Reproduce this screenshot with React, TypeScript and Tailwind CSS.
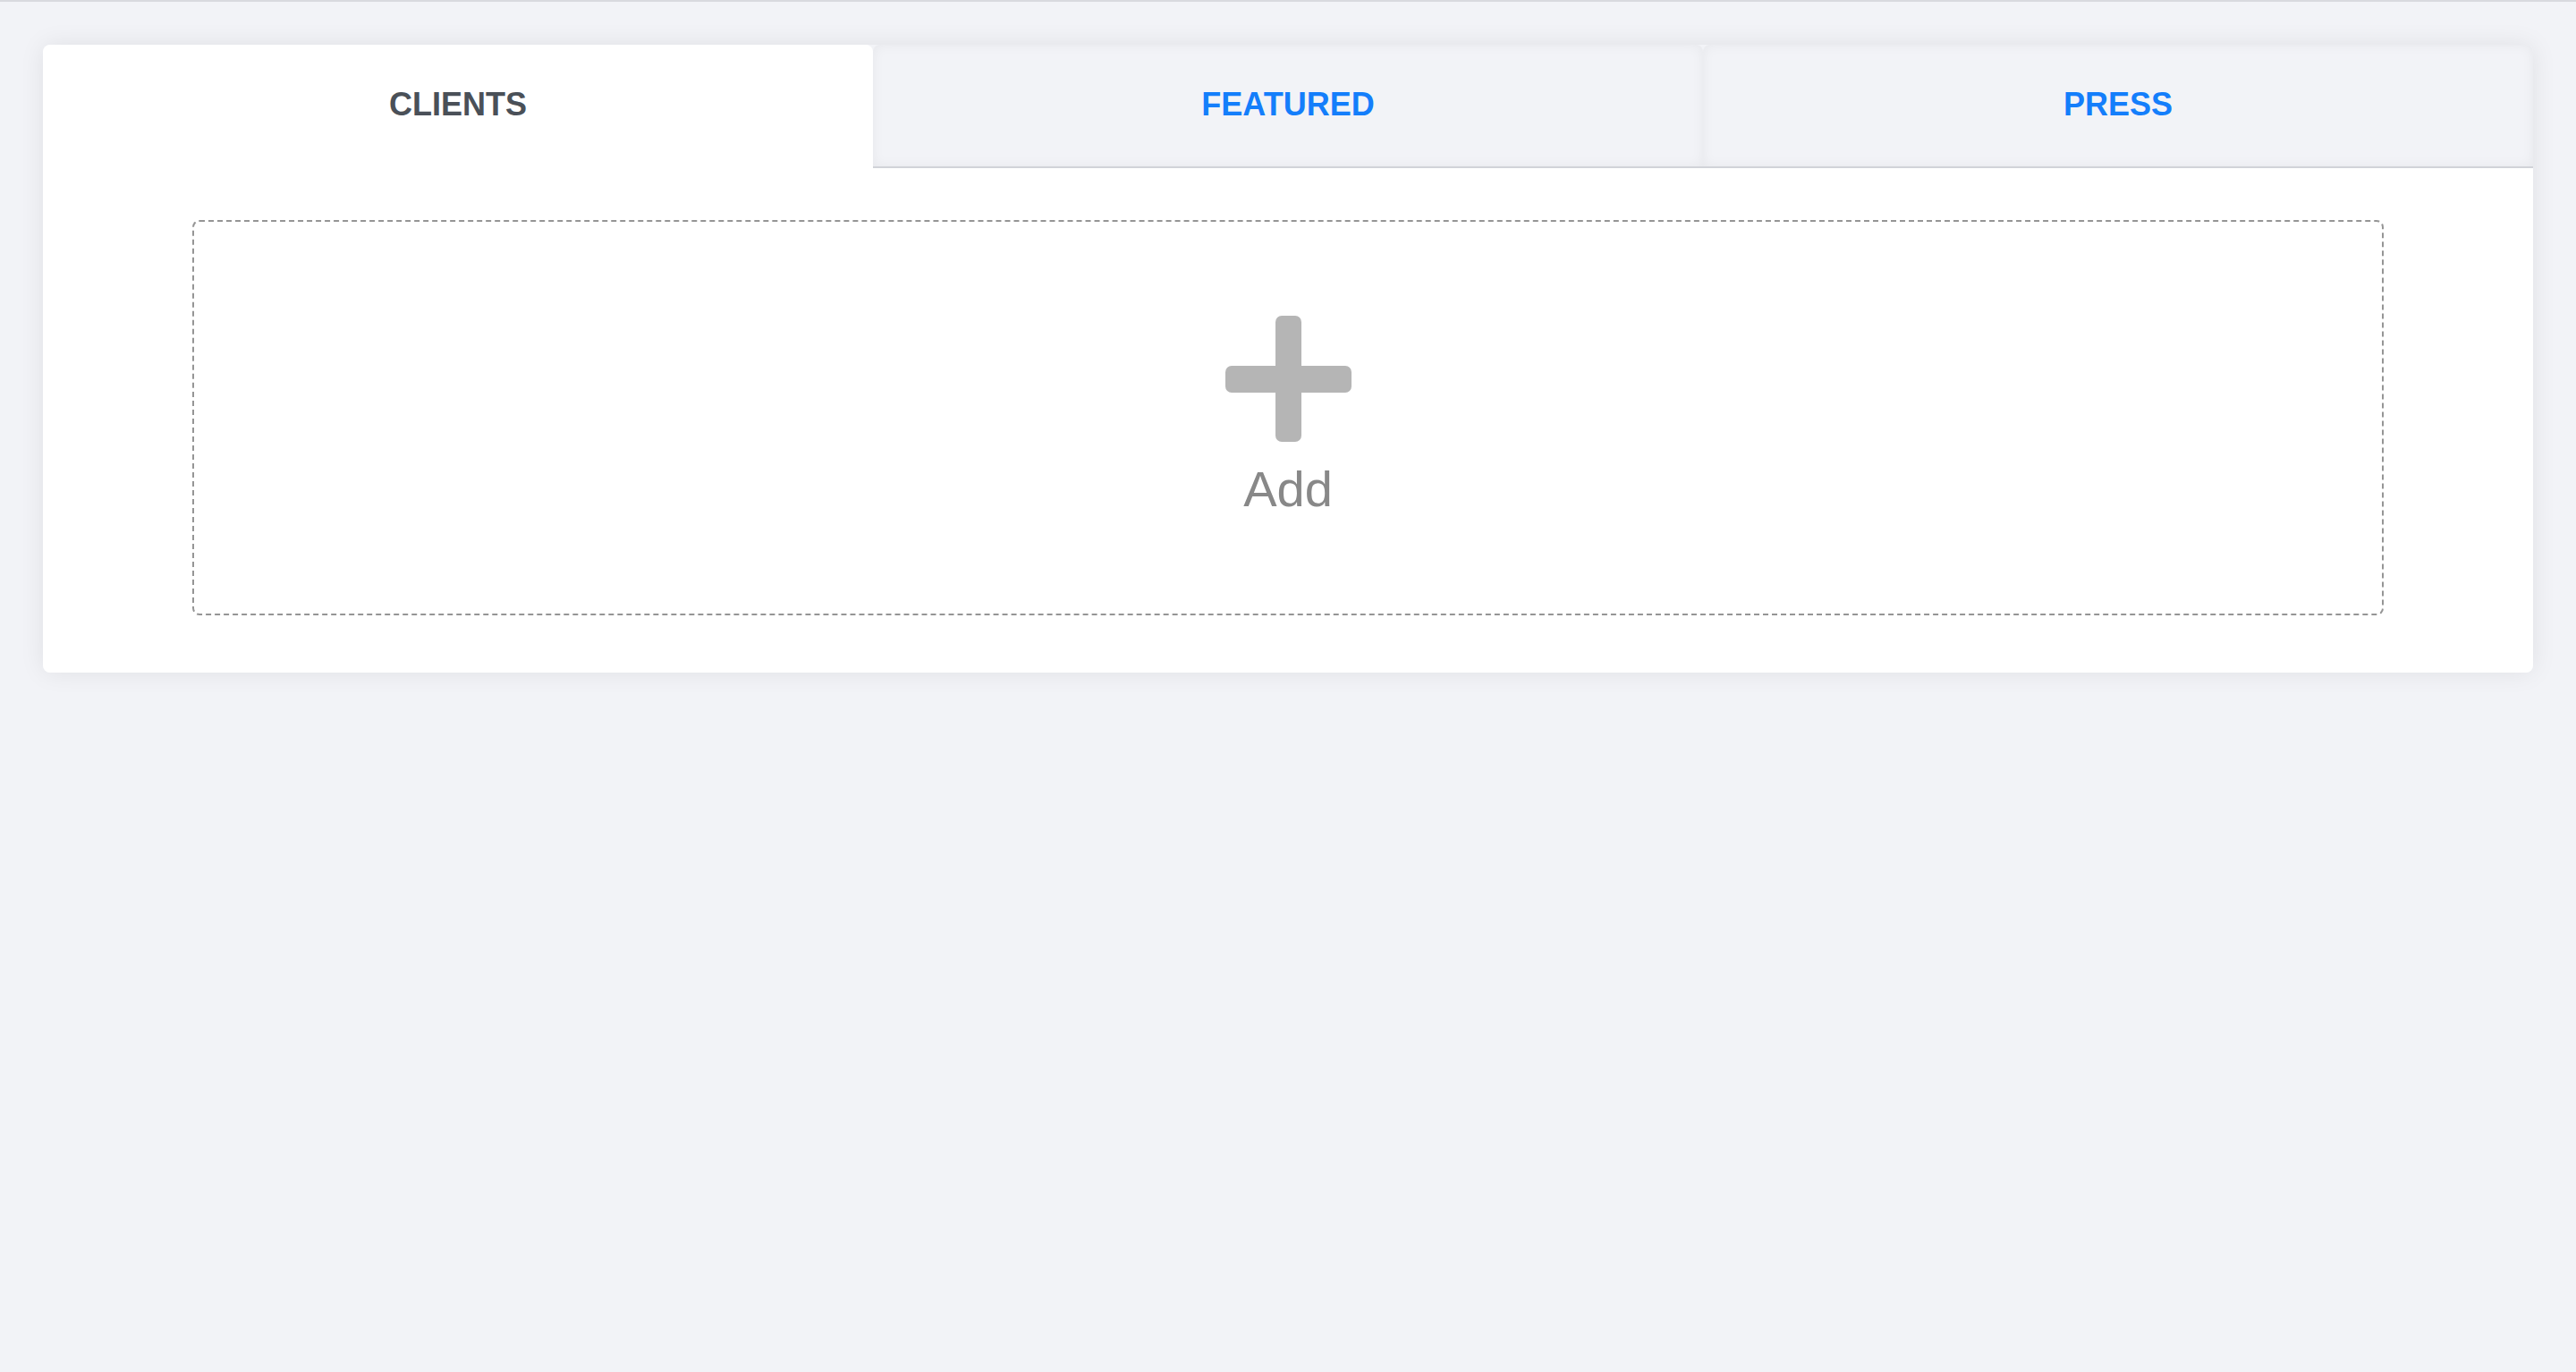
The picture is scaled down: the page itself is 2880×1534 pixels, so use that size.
import { useState } from 'react'

const tabs = ['CLIENTS', 'FEATURED', 'PRESS']

function PlusIcon() {
  return (
    <svg width="141" height="141" viewBox="0 0 141 141">
      <rect x="56" y="0" width="29" height="141" rx="7" fill="#b5b5b5" />
      <rect x="0" y="56" width="141" height="30" rx="7" fill="#b5b5b5" />
    </svg>
  )
}

export default function App() {
  const [active, setActive] = useState(0)

  return (
    <div
      className="min-h-screen w-full bg-[#f2f3f7] border-t-2 border-[#d9dadf] px-12 pt-12"
      style={{ fontFamily: "-apple-system, 'Liberation Sans', Arial, sans-serif" }}
    >
      <div className="rounded-lg shadow-[0_0_28px_rgba(0,0,0,0.08)]">
        {/* Tabs */}
        <div className="flex">
          {tabs.map((t, i) => {
            const isActive = i === active
            return (
              <button
                key={t}
                onClick={() => setActive(i)}
                className={
                  isActive
                    ? 'flex-1 h-[138px] flex items-center justify-center rounded-t-lg bg-white text-[36px] font-bold text-[#4a5058] pb-1'
                    : 'flex-1 h-[138px] flex items-center justify-center rounded-t-lg bg-[#f2f3f7] border-b-2 border-[#d1d3d8] text-[36px] font-bold text-[#147efb] shadow-[inset_0_0_14px_rgba(0,0,0,0.05)] pb-0.5'
                }
              >
                {t}
              </button>
            )
          })}
        </div>

        {/* Body */}
        <div className="bg-white rounded-b-lg pt-[58px] pb-[64px]">
          <button className="w-[88%] mx-auto h-[442px] border-2 border-dashed border-[#959595] rounded-lg flex flex-col items-center pt-[105px]">
            <PlusIcon />
            <span
              className="mt-[25px] text-[56px] leading-none text-[#888888]"
              style={{ fontFamily: "'Liberation Sans', Arial, sans-serif" }}
            >
              Add
            </span>
          </button>
        </div>
      </div>
    </div>
  )
}
